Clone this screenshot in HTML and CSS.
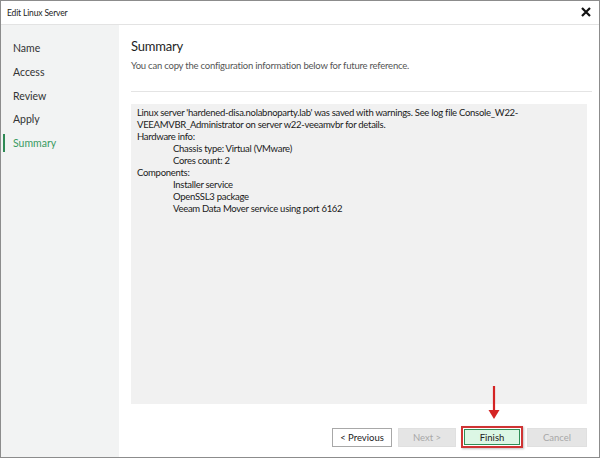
FILE: index.html
```html
<!DOCTYPE html>
<html lang="en">
<head>
    <meta charset="UTF-8">
    <meta name="viewport" content="width=device-width, initial-scale=1.0">
    <title>Edit Linux Server</title>
    <link rel="stylesheet" href="styles.css">
</head>
<body>
    <div class="window">
        <!-- Title bar -->
        <div class="titlebar">
            <span class="title">Edit Linux Server</span>
            <svg class="close" width="10" height="10" viewBox="0 0 10 10">
                <path d="M1 1 L9 9 M9 1 L1 9" stroke="#111" stroke-width="2.2"/>
            </svg>
        </div>

        <div class="content">
            <!-- Steps -->
            <ul class="steps">
                <li>Name</li>
                <li>Access</li>
                <li>Review</li>
                <li>Apply</li>
                <li class="active">Summary</li>
            </ul>

            <div class="main">
                <h1>Summary</h1>
                <p class="subtitle">You can copy the configuration information below for future reference.</p>
                <div class="rule"></div>

                <div class="summary-box">
                    <div>Linux server 'hardened-disa.nolabnoparty.lab' was saved with warnings. See log file Console_W22-<br>VEEAMVBR_Administrator on server w22-veeamvbr for details.</div>
                    <div>Hardware info:</div>
                    <div class="indent">Chassis type: Virtual (VMware)</div>
                    <div class="indent">Cores count: 2</div>
                    <div>Components:</div>
                    <div class="indent">Installer service</div>
                    <div class="indent">OpenSSL3 package</div>
                    <div class="indent">Veeam Data Mover service using port 6162</div>
                </div>

                <div class="buttons">
                    <button class="btn">&lt; Previous</button>
                    <button class="btn disabled">Next &gt;</button>
                    <span class="highlight">
                        <button class="btn finish">Finish</button>
                        <svg class="arrow" width="14" height="36" viewBox="0 0 14 36">
                            <path d="M7 0 V26" stroke="#d42424" stroke-width="2.2"/>
                            <path d="M1.5 24 L7 33 L12.5 24 Z" fill="#d42424"/>
                        </svg>
                    </span>
                    <button class="btn disabled cancel">Cancel</button>
                </div>
            </div>
        </div>
    </div>
</body>
</html>
```

FILE: styles.css
```css
body {
    margin: 0;
    padding: 0;
    background-color: #fff;
    font-family: Lato, "Open Sans", sans-serif;
    color: #222;
}

.window {
    width: 598px;
    height: 456px;
    border: 1px solid #8c8c8c;
    display: flex;
    flex-direction: column;
    background-color: #fff;
}

.titlebar {
    height: 23px;
    border-bottom: 1px solid #e3e3e3;
    display: flex;
    align-items: center;
    justify-content: space-between;
    padding: 0 8px 0 6px;
}

.title {
    font-size: 8.5px;
    letter-spacing: -0.15px;
    color: #222;
}

.close {
    display: block;
    margin-top: -1px;
}

.content {
    flex: 1;
    display: flex;
}

.steps {
    width: 118px;
    margin: 0;
    padding: 14px 0 0 0;
    list-style: none;
    background-color: #f2f3f3;
}

.steps li {
    font-size: 10.5px;
    line-height: 18px;
    height: 18px;
    margin-bottom: 5.8px;
    padding-left: 8px;
    color: #333;
    border-left: 2px solid transparent;
    margin-left: 2px;
}

.steps li.active {
    color: #3a9a62;
    border-left-color: #2f8a55;
}

.main {
    flex: 1;
    display: flex;
    flex-direction: column;
    padding: 12px 12px 0 12px;
}

h1 {
    font-size: 13px;
    font-weight: normal;
    letter-spacing: -0.2px;
    line-height: 18px;
    margin: 0;
    color: #1e1e1e;
}

.subtitle {
    font-size: 9.5px;
    letter-spacing: -0.22px;
    line-height: 14px;
    margin: 4px 0 0 0;
    color: #555;
}

.rule {
    height: 1px;
    background-color: #e4e4e4;
    margin: 18px -5px 0 0;
}

.summary-box {
    margin-top: 12px;
    height: 294px;
    padding: 3px 6px;
    background-color: #f1f1f1;
    font-size: 9.5px;
    letter-spacing: -0.28px;
    line-height: 12px;
    color: #1a1a1a;
}

.indent {
    padding-left: 36px;
}

.buttons {
    display: flex;
    justify-content: flex-end;
    align-items: center;
    margin-top: 22px;
}

.btn {
    font-family: Lato, "Open Sans", sans-serif;
    font-size: 9.5px;
    height: 19px;
    width: 60px;
    padding: 0;
    border: 1px solid #a8a8a8;
    background-color: #fff;
    color: #222;
}

.btn.disabled {
    width: 58px;
    background-color: #e5e5e5;
    border-color: #e0e0e0;
    color: #a8a8a8;
    margin-left: 6px;
}

.btn.cancel {
    width: 60px;
    margin-left: 4px;
}

.highlight {
    position: relative;
    margin-left: 5px;
    border: 2px solid #cf3434;
    padding: 1px;
    box-shadow: 1px 1px 2px rgba(0, 0, 0, 0.25);
}

.finish {
    display: block;
    width: 56px;
    height: 16px;
    border: 1px solid #2f8f57;
    background-color: #dcf7e5;
}

.arrow {
    position: absolute;
    left: 24px;
    top: -42px;
}
```
